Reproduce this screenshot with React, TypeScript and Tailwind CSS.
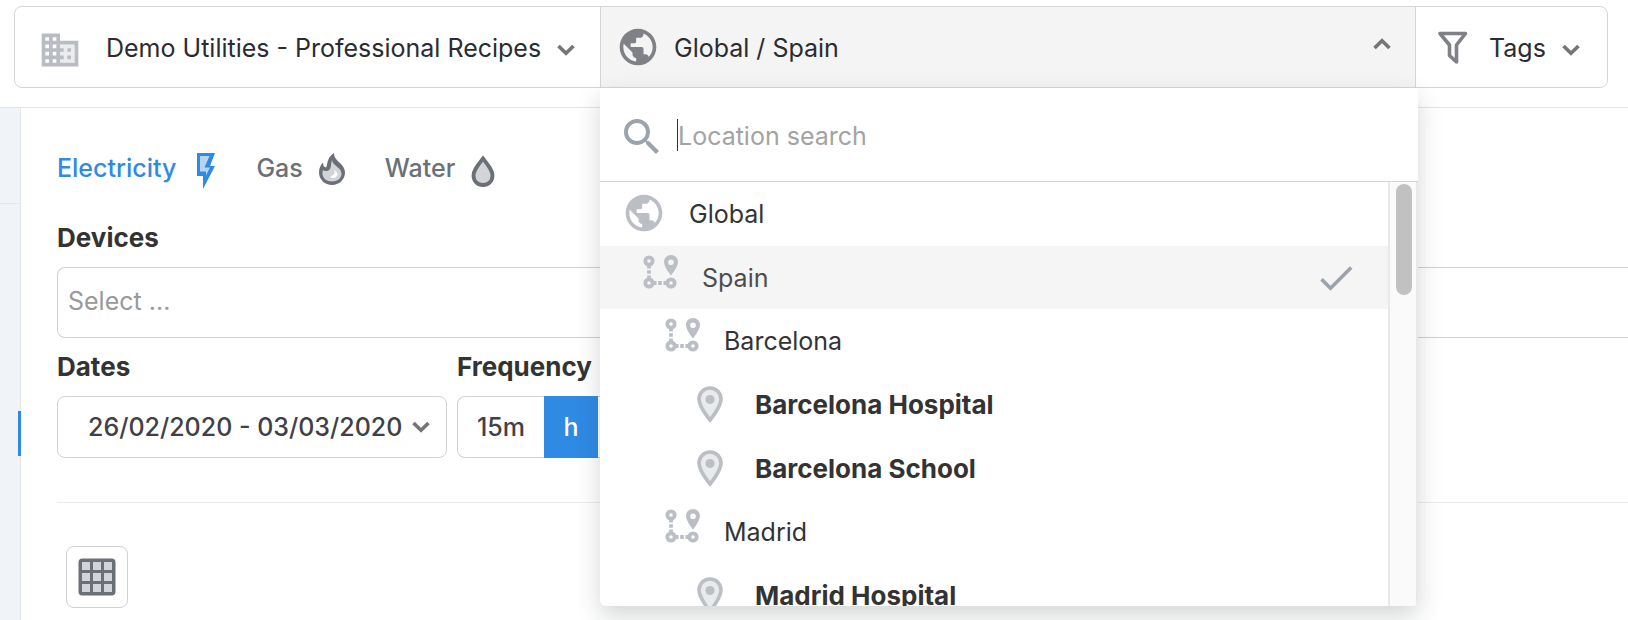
import React from "react";
import { MdPublic, MdSearch, MdCheck } from "react-icons/md";

type IconProps = { className?: string };

const Chevron = ({ className = "", up = false }: IconProps & { up?: boolean }) => (
  <svg viewBox="0 0 18 12" fill="none" stroke="#757575" strokeWidth="3.6" className={`h-3 w-[18px] shrink-0 ${className}`} aria-hidden="true">
    <path d={up ? "M1.5 10 9 2.8 16.5 10" : "M1.5 2 9 9.2 16.5 2"} />
  </svg>
);

const Building = () => (
  <svg viewBox="0 0 24 24" className="mt-1.5 h-11 w-11 shrink-0" aria-hidden="true">
    <path fill="#ebecee" d="M12 9h8v10h-8z" />
    <path
      fill="#b9bcc3"
      d="M12 7V3H2v18h20V7H12zM6 19H4v-2h2v2zm0-4H4v-2h2v2zm0-4H4V9h2v2zm0-4H4V5h2v2zm4 12H8v-2h2v2zm0-4H8v-2h2v2zm0-4H8V9h2v2zm0-4H8V5h2v2zm10 12h-8v-2h2v-2h-2v-2h2v-2h-2V9h8v10zm-2-8h-2v2h2v-2zm0 4h-2v2h2v-2z"
    />
  </svg>
);

const Bolt = () => (
  <svg viewBox="0 0 20 36" className="mt-1.5 h-9 w-5 shrink-0" aria-hidden="true">
    <path fill="#2f8ae4" d="M1 0H19L14 13H19L7 36V23H1z" />
    <path fill="#b5d5f6" d="M4 3H13.500L8.500 14.500H14L10 22.500V18.500H4z" />
  </svg>
);

const Flame = () => (
  <svg viewBox="0 0 26 32" className="mt-0.5 h-8 w-[26px] shrink-0" aria-hidden="true">
    <path
      fill="#6b6f78"
      d="M15 0c0 5 3 7 6 10C24 13 26 16 26 19.500 26 26.500 20 32 13 32S0 26.500 0 19.500C0 15.500 1.500 12 4 9.500c0 3 1 4.500 3 5C9 12 7 5 15 0z"
    />
    <path fill="#d3d4d7" d="M13 7c0 5 9.500 7.500 9.500 13.500 0 5-4.500 8-9.500 8s-9.500-3-9.500-8c0-1.500.2-2.500.5-3.500C5.500 18.500 9.500 18.500 11 16c1.500-2.500.5-5 2-9z" />
    <path fill="#fff" d="M14.500 17c3 3.500-.5 5.500-3 6.500 1 3 7.500 1.500 7-3-.3-1.500-2-2.500-4-3.500z" />
  </svg>
);

const Drop = () => (
  <svg viewBox="0 0 24 32" className="mt-1.5 h-8 w-6 shrink-0" aria-hidden="true">
    <path
      fill="#d3d4d7"
      stroke="#6b6f78"
      strokeWidth="3.8"
      d="M12 3.500C7 10 2.500 15 2.500 20.500c0 5.500 4 9.500 9.500 9.500s9.500-4 9.500-9.500C21.500 15 17 10 12 3.500z"
    />
  </svg>
);

const Funnel = () => (
  <svg viewBox="0 0 30 34" className="mt-0.5 h-[34px] w-[30px] shrink-0" aria-hidden="true">
    <path
      fill="none"
      stroke="#808187"
      strokeWidth="3.6"
      strokeLinejoin="round"
      d="M2 2.500H27.500L18.500 14V31L11.500 24.500V14z"
    />
  </svg>
);

const Route = () => (
  <svg viewBox="0 0 36 36" className="h-9 w-9 shrink-0" aria-hidden="true">
    <g fill="none" stroke="#bbbfc5" strokeWidth="3.8">
      <circle cx="6" cy="7" r="3.700" />
      <circle cx="6" cy="29" r="3.700" />
      <circle cx="28" cy="29" r="3.700" />
      <path d="M6 11v3.500M6 16.200v3.600M6 21.500v3.500M10 29h3.500M15.200 29h3.600M20.500 29h3.500" />
    </g>
    <path
      fill="#bbbfc5"
      fillRule="evenodd"
      d="M28 1c-4 0-7 3-7 7 0 5 7 13.500 7 13.500S35 13 35 8c0-4-3-7-7-7zm0 4.500a2.800 2.800 0 1 1 0 5.600 2.800 2.800 0 0 1 0-5.600z"
    />
  </svg>
);

const Pin = () => (
  <svg viewBox="0 0 26 37" className="h-[37px] w-[26px] shrink-0" aria-hidden="true">
    <path fill="#e8eaec" stroke="#bbbfc5" strokeWidth="3.6" d="M13 2C6.800 2 2 6.800 2 13c0 8 11 21 11 21s11-13 11-21C24 6.800 19.200 2 13 2z" />
    <circle cx="13" cy="13.500" r="4.600" fill="#bbbfc5" />
  </svg>
);

const GridIcon = () => (
  <svg viewBox="0 0 38 38" className="h-[38px] w-[38px]" aria-hidden="true">
    <rect x="0.500" y="0.500" width="37" height="37" rx="4" fill="#6b6f78" />
    <g fill="#d3d4d7">
      {[4, 15, 26].map((y) => [4, 15, 26].map((x) => <rect key={`${x}-${y}`} x={x} y={y} width="8" height="8" />))}
    </g>
  </svg>
);

type Kind = "root" | "region" | "site";
const locations: { name: string; kind: Kind; pad: string; selected?: boolean }[] = [
  { name: "Global", kind: "root", pad: "pl-[22px]" },
  { name: "Spain", kind: "region", pad: "pl-[43px]", selected: true },
  { name: "Barcelona", kind: "region", pad: "pl-[65px]" },
  { name: "Barcelona Hospital", kind: "site", pad: "pl-[97px]" },
  { name: "Barcelona School", kind: "site", pad: "pl-[97px]" },
  { name: "Madrid", kind: "region", pad: "pl-[65px]" },
  { name: "Madrid Hospital", kind: "site", pad: "pl-[97px]" },
];

const rowStyle: Record<Kind, string> = {
  root: "h-16 gap-[23px] pb-0.5",
  region: "h-[63px] gap-[23px]",
  site: "h-16 gap-8 text-[26px] font-bold",
};

function LocationRow({ name, kind, pad, selected }: (typeof locations)[number]) {
  return (
    <li role="option" aria-selected={!!selected} className={selected ? "bg-[#f5f5f5] text-[#4d4d4d]" : "text-[#333]"}>
      <button type="button" className={`flex w-full items-center text-left ${rowStyle[kind]} ${pad}`}>
        {kind === "root" && <MdPublic className="h-11 w-11 shrink-0 text-[#bbbfc5]" />}
        {kind === "region" && <span className="pb-3"><Route /></span>}
        {kind === "site" && <Pin />}
        <span className={kind === "region" ? "flex-1" : "flex-1 pt-0.5"}>{name}</span>
        {selected && <MdCheck className="mr-[30px] h-11 w-11 text-[#9da3aa]" />}
      </button>
    </li>
  );
}

function LocationMenu() {
  return (
    <div className="absolute top-full -right-[3px] -left-px z-10 mt-px overflow-hidden rounded-b-md bg-white shadow-[0_10px_24px_rgba(40,50,50,0.2)]">
      <label className="flex h-[94px] items-center gap-[11px] border-b border-[#d3d5d8] pt-1 pl-[18px]">
        <MdSearch className="h-12 w-12 shrink-0 text-[#9da3aa]" />
        <span className="mb-1 h-8 w-px bg-[#333]" />
        <input aria-label="Location search" placeholder="Location search" className="-ml-[11px] min-w-0 flex-1 pb-0.5 outline-none placeholder:text-[#a3a3a3]" />
      </label>
      <div className="flex h-[424px]">
        <ul role="listbox" aria-label="Locations" className="flex-1 overflow-hidden">
          {locations.map((l) => <LocationRow key={l.name} {...l} />)}
        </ul>
        <div className="w-[30px] border-x-2 border-[#e8e8e8] bg-[#fafafa] px-1.5 pt-0.5">
          <div className="h-[111px] w-4 rounded-full bg-[#c1c1c1]" />
        </div>
      </div>
    </div>
  );
}

export default function App() {
  return (
    <div className="flex min-h-screen flex-col overflow-hidden bg-white font-['Inter','Liberation_Sans',sans-serif] text-[25px] leading-9 text-[#2b2c30]">
      <header className="border-b border-[#e2e3e5] pt-1.5 pr-5 pb-[19px] pl-3.5">
        <div className="flex h-[82px] rounded-lg border border-[#d3d5d8]">
          <button type="button" className="flex w-[585px] items-center pl-[23px]">
            <Building />
            <span className="ml-6 pt-0.5 whitespace-nowrap">Demo Utilities - Professional Recipes</span>
            <Chevron className="mt-1.5 ml-4" />
          </button>
          <div className="relative flex-1 border-x border-[#d3d5d8] bg-[#f4f4f4]">
            <button type="button" className="flex h-full w-full items-center pr-6 pl-[15px]">
              <MdPublic className="h-11 w-11 shrink-0 text-[#808187]" />
              <span className="ml-3.5 flex-1 pt-0.5 text-left">Global / Spain</span>
              <Chevron up className="mb-1.5" />
            </button>
            <LocationMenu />
          </div>
          <button type="button" className="flex w-[191px] items-center pl-[22px]">
            <Funnel />
            <span className="ml-[21px] pt-0.5">Tags</span>
            <Chevron className="mt-1.5 ml-4" />
          </button>
        </div>
      </header>

      <div className="flex flex-1">
        <aside className="flex w-[21px] shrink-0 flex-col items-end border-r border-[#e4e6e8] bg-[#f0f4f8]">
          <div className="h-24 w-full border-b border-[#e4e8ec]" />
          <div className="mt-[207px] -mr-px h-[45px] w-[3px] bg-[#2f8ae4]" />
        </aside>
        <main className="min-w-0 flex-1 pt-9 pl-9">
          <nav className="flex h-12 items-center gap-10 font-medium text-[#6b6f78]">
            <a href="#electricity" className="flex items-center gap-5 text-[#2f8ae4]">Electricity <Bolt /></a>
            <a href="#gas" className="flex items-center gap-4">Gas <Flame /></a>
            <a href="#water" className="flex items-center gap-4">Water <Drop /></a>
          </nav>
          <label htmlFor="devices" className="mt-7 block h-9 text-[26px] font-bold text-[#333]">Devices</label>
          <input id="devices" placeholder="Select ..." className="mt-[11px] block h-[71px] w-full rounded-l-lg border border-r-0 border-[#cfd1d4] px-2.5 pb-1 placeholder:text-[#999]" />
          <div className="flex gap-2.5 border-b border-[#ebecee] pt-[11px] pb-11">
            <div className="w-[390px]">
              <h2 className="h-9 text-[26px] font-bold text-[#333]">Dates</h2>
              <button type="button" className="mt-[11px] flex h-[62px] w-full items-center justify-between rounded-lg border border-[#cfd1d4] pr-4 pl-[30px] font-medium text-[#3f4146]">
                26/02/2020 - 03/03/2020
                <Chevron />
              </button>
            </div>
            <div>
              <h2 className="h-9 text-[26px] font-bold text-[#333]">Frequency</h2>
              <div className="mt-[11px] flex h-[62px] font-medium text-[#3f4146]">
                <button type="button" className="w-[87px] rounded-l-lg border border-r-0 border-[#cfd1d4]">15m</button>
                <button type="button" className="w-[54px] bg-[#2f8ae4] text-white">h</button>
                <button type="button" className="w-14 border border-l-0 border-[#cfd1d4]" aria-label="Day" />
              </div>
            </div>
          </div>
          <button type="button" aria-label="Table view" className="mt-[43px] ml-[9px] flex h-[62px] w-[62px] items-center justify-center rounded-lg border border-[#cfd1d4]">
            <GridIcon />
          </button>
        </main>
      </div>
    </div>
  );
}
